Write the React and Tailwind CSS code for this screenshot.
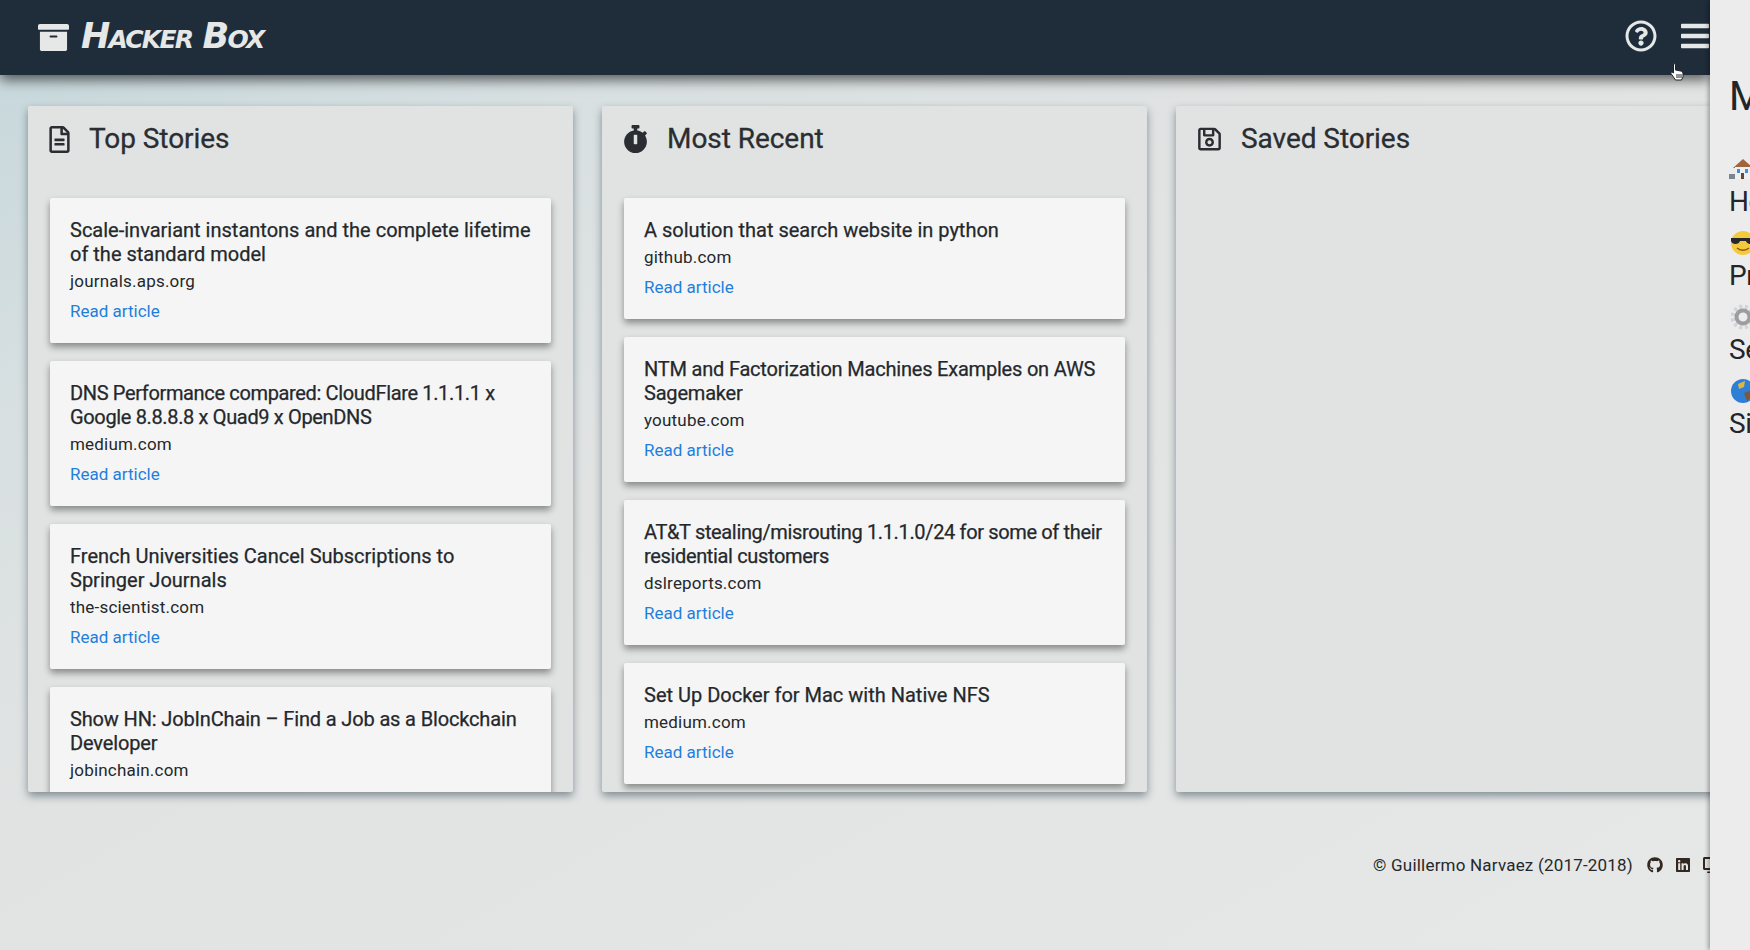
import { FaArchive, FaBars, FaDesktop, FaGithub, FaLinkedin, FaRegFileAlt, FaRegQuestionCircle, FaRegSave, FaStopwatch } from 'react-icons/fa'

// digit-heavy titles run tighter than the rest in the reference
const TOP = [
  { title: 'Scale-invariant instantons and the complete lifetime of the standard model', site: 'journals.aps.org', track: 'tracking-normal' },
  { title: 'DNS Performance compared: CloudFlare 1.1.1.1 x Google 8.8.8.8 x Quad9 x OpenDNS', site: 'medium.com', track: 'tracking-[-0.35px]' },
  { title: 'French Universities Cancel Subscriptions to Springer Journals', site: 'the-scientist.com', track: 'tracking-normal' },
  { title: 'Show HN: JobInChain – Find a Job as a Blockchain Developer', site: 'jobinchain.com', track: 'tracking-[-0.15px]' },
]

const RECENT = [
  { title: 'A solution that search website in python', site: 'github.com', track: 'tracking-normal' },
  { title: 'NTM and Factorization Machines Examples on AWS Sagemaker', site: 'youtube.com', track: 'tracking-[-0.2px]' },
  { title: 'AT&T stealing/misrouting 1.1.1.0/24 for some of their residential customers', site: 'dslreports.com', track: 'tracking-[-0.35px]' },
  { title: 'Set Up Docker for Mac with Native NFS', site: 'medium.com', track: 'tracking-normal' },
]

function House() {
  return (
    <svg width="28" height="24" viewBox="0 0 28 24">
      <rect x="0" y="17" width="7" height="5" fill="#7d8590" />
      <path d="M4 11 L14 2 L24 11 Z" fill="#a0653c" />
      <rect x="6" y="10" width="16" height="12" fill="#eef0f2" />
      <rect x="8" y="12" width="3" height="4" fill="#3d8fe0" />
      <rect x="16" y="12" width="3" height="4" fill="#3d8fe0" />
      <rect x="12" y="16" width="3" height="6" fill="#6b4630" />
    </svg>
  )
}

function Cool() {
  return (
    <svg width="28" height="26" viewBox="0 0 28 26">
      <circle cx="14" cy="13" r="12" fill="#f5c93e" />
      <path d="M2 8 H26 V11 C26 15 18 15 17 11 H11 C10 15 3 15 2 11 Z" fill="#26262b" />
      <path d="M8 18 C11 21 17 21 20 18" stroke="#8a5a14" strokeWidth="1.5" fill="none" />
    </svg>
  )
}

function Gear() {
  return (
    <svg width="28" height="26" viewBox="0 0 28 26">
      <circle cx="14" cy="13" r="10" fill="none" stroke="#d2d4d6" strokeWidth="5" strokeDasharray="3 2.4" />
      <circle cx="14" cy="13" r="6.5" fill="none" stroke="#9b9da0" strokeWidth="4" />
    </svg>
  )
}

function Globe() {
  return (
    <svg width="28" height="26" viewBox="0 0 28 26">
      <circle cx="14" cy="13" r="12" fill="#2f7fd6" />
      <path d="M9 6 L16 3 L15 9 L10 11 Z" fill="#e0b53f" />
      <path d="M15 15 L23 12 L25 18 L18 23 Z" fill="#7a5a3a" />
    </svg>
  )
}

const MENU = [
  { icon: House, label: 'Home' },
  { icon: Cool, label: 'Profile' },
  { icon: Gear, label: 'Settings' },
  { icon: Globe, label: 'Sign out' },
]

function Card({ story }) {
  return (
    <div className="bg-[#f5f5f5] rounded-[2px] p-5 shadow-[0_4px_7px_rgba(0,0,0,0.4)] shrink-0">
      <h3 className={`text-[20px] leading-6 font-normal [-webkit-text-stroke:0.25px] text-[#24282c] mb-[3px] ${story.track}`}>{story.title}</h3>
      <p className="text-[17px] leading-6 tracking-[0.2px] text-[#24282c]">{story.site}</p>
      <a className="block mt-[6px] text-[17px] leading-6 text-[#1e7fdc]">Read article</a>
    </div>
  )
}

function Panel({ icon: Icon, title, stories, iconClass }) {
  return (
    <section className="h-[686px] bg-[#e1e3e3] rounded-[2px] shadow-[0_4px_8px_rgba(50,70,80,0.55)] overflow-hidden">
      <div className="h-[92px] pl-[21px] pt-[18px] flex items-start gap-[19px] text-[#2a2d31]">
        <div className="h-[30px] flex items-center">
          <Icon className={iconClass} />
        </div>
        <h2 className="text-[28px] leading-[30px] tracking-[-0.05px] font-normal [-webkit-text-stroke:0.3px]">{title}</h2>
      </div>
      <div className="px-[22px] flex flex-col gap-[18px]">
        {stories.map((s) => (
          <Card key={s.title} story={s} />
        ))}
      </div>
    </section>
  )
}

export default function App() {
  return (
    <div className="relative flex h-[950px] w-[1750px] overflow-hidden font-['Roboto',sans-serif]">
      <main className="w-[1710px] shrink-0 overflow-hidden flex flex-col bg-[linear-gradient(150deg,#c4d6db_0%,#d8e0e1_22%,#e1e3e3_42%,#e6e7e7_100%)]">
        <header className="h-[75px] shrink-0 bg-[#1f2d3b] shadow-[0_5px_12px_rgba(0,0,0,0.6)] flex items-center pl-[38px] pb-[3px] relative z-10 text-[#e6e7e7]">
          <FaArchive size={31} className="mt-[3px]" />
          <span className="ml-[12px] mt-[1px] text-[35px] leading-none font-['DejaVu_Sans',sans-serif] font-bold italic [font-variant:small-caps] tracking-[-1.8px] whitespace-nowrap">Hacker Box</span>
          <div className="ml-auto flex items-center gap-[22px] mr-[-1px]">
            <FaRegQuestionCircle size={32} />
            <FaBars size={32} />
          </div>
        </header>

        <div className="mt-[31px] pl-[28px] grid grid-cols-[545px_545px_545px] gap-[29px]">
          <Panel icon={FaRegFileAlt} title="Top Stories" stories={TOP} iconClass="w-[21px] h-[27px]" />
          <Panel icon={FaStopwatch} title="Most Recent" stories={RECENT} iconClass="w-[25px] h-[28px]" />
          <Panel icon={FaRegSave} title="Saved Stories" stories={[]} iconClass="w-[25px] h-[26px]" />
        </div>

        <footer className="mt-[61px] flex justify-end items-center mr-[-11px] text-[17px] leading-6 tracking-[0.2px] text-[#24282c] whitespace-nowrap">
          <span>© Guillermo Narvaez (2017-2018)</span>
          <FaGithub size={16} className="ml-[14px] text-[#33281f]" />
          <FaLinkedin size={16} className="ml-[12px] text-[#33281f]" />
          <FaDesktop size={18} className="ml-[12px] text-[#33281f]" />
        </footer>
      </main>

      <aside className="flex-1 overflow-hidden bg-[#ececec] shadow-[-2px_0_4px_rgba(0,0,0,0.3)] relative z-20 whitespace-nowrap text-[#22262b]">
        <div className="w-[260px] pl-[19px] pt-[74px]">
          <h2 className="text-[40px] leading-[46px] font-normal">Menu</h2>
          <ul className="mt-[34px] flex flex-col">
            {MENU.map((m) => (
              <li key={m.label} className="h-[74px] flex flex-col">
                <span className="h-[30px] flex items-center">
                  <m.icon />
                </span>
                <span className="text-[28px] leading-[36px] tracking-[-0.5px]">{m.label}</span>
              </li>
            ))}
          </ul>
        </div>
      </aside>

      {/* mouse pointer */}
      <svg className="absolute left-[1670px] top-[63px] z-30" width="14" height="18" viewBox="0 0 14 18">
        <path d="M3.5 1 C4.5 0.5 5.5 1 5.5 2 V7 L10.5 8 C12.5 8.5 13 9.5 13 11 V14 L11.5 17 H5.5 L1 10.5 C0.5 9.5 1.5 8.5 3.5 10 Z" fill="#fff" stroke="#222" strokeWidth="1" />
        <path d="M7 11 V15 M9 11 V15 M11 11 V15" stroke="#222" strokeWidth="1" />
      </svg>
    </div>
  )
}
